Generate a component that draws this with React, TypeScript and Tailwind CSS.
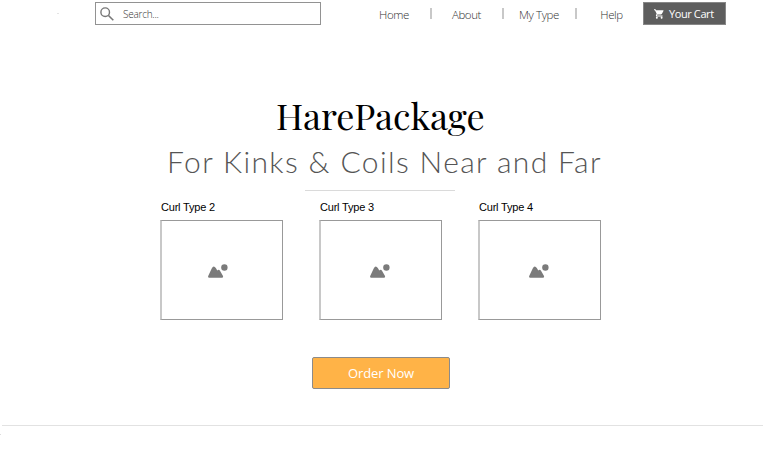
const sourceSans = "font-['Source_Sans_Pro','Open_Sans','Noto_Sans',sans-serif]";

function ImageIcon() {
  return (
    <svg width="20" height="14" viewBox="0 0 20 14" fill="#7b7b7b" aria-hidden="true">
      <path d="M.2 12 3.7 4.4Q5.7 .8 7.8 4.1L9.3 6.6Q10.8 5 12 6.7L15 12Q15.4 13.6 14 13.7H1.2Q-.3 13.5.2 12Z" />
      <circle cx="16.4" cy="3.5" r="3.2" />
    </svg>
  );
}

function SearchIcon() {
  return (
    <svg width="14" height="14" viewBox="0 0 14 14" fill="none" stroke="#777" aria-hidden="true">
      <circle cx="5.2" cy="5.2" r="4.3" strokeWidth="1.4" />
      <path d="m8.5 8.5 4.8 4.8" strokeWidth="1.6" />
    </svg>
  );
}

function CartIcon() {
  return (
    <svg width="10" height="10" viewBox="1 2 21 20" fill="#fff" aria-hidden="true">
      <path d="M7 18c-1.1 0-1.99.9-1.99 2S5.9 22 7 22s2-.9 2-2-.9-2-2-2zM1 2v2h2l3.6 7.59-1.35 2.45c-.16.28-.25.61-.25.96 0 1.1.9 2 2 2h12v-2H7.42c-.14 0-.25-.11-.25-.25l.03-.12.9-1.63h7.45c.75 0 1.41-.41 1.75-1.03l3.58-6.49A1 1 0 0 0 20 4H5.21l-.94-2H1zm16 16c-1.1 0-1.99.9-1.99 2s.89 2 1.99 2 2-.9 2-2-.9-2-2-2z" />
    </svg>
  );
}

function Separator() {
  return <span className="mt-2 h-[11px] w-[2px] shrink-0 bg-[#c8c8c8]" />;
}

function NavLink({ label, className }: { label: string; className: string }) {
  return (
    <a className={`shrink-0 whitespace-nowrap pt-[7px] text-center text-[11.5px] leading-4 font-light tracking-[-0.4px] text-[#333] ${className}`}>
      {label}
    </a>
  );
}

function CurlCard({ label, iconClass }: { label: string; iconClass: string }) {
  return (
    <div className="w-[123px]">
      <div className="h-[20px] pl-px font-['Liberation_Sans',sans-serif] text-[11px] leading-[14px] tracking-[-0.2px] text-black">{label}</div>
      <div className={`flex h-[100px] border border-l-2 border-[#999] border-l-[#c8c8c8] pt-[43px] ${iconClass}`}>
        <ImageIcon />
      </div>
    </div>
  );
}

export default function App() {
  return (
    <div className={`h-[464px] w-[764px] overflow-hidden bg-white ${sourceSans}`}>
      <header className="flex h-[28px] items-start">
        <span className="mt-[13px] ml-[57px] h-px w-[2px] bg-[#e4e4e4]" />
        <div className="mt-[2px] ml-[36px] flex h-[23px] w-[226px] items-center border border-[#929292] pl-[4px]">
          <SearchIcon />
          <span className="mt-px ml-[9px] text-[10px] font-light tracking-[-0.25px] text-[#333]">Search...</span>
        </div>
        <nav className="flex w-[322px] pl-[53px]">
          <NavLink label="Home" className="w-[40px]" />
          <span className="w-[16px] shrink-0" />
          <Separator />
          <NavLink label="About" className="w-[70px] pr-px" />
          <Separator />
          <NavLink label="My Type" className="w-[71px] pr-px" />
          <Separator />
          <NavLink label="Help" className="w-[66px] pl-[3px]" />
        </nav>
        <button className="mt-[2px] flex h-[23px] w-[83px] items-center gap-[5px] border border-[#878787] bg-[#5e5e5e] pl-[10px] text-[11px] tracking-[-0.4px] whitespace-nowrap text-white">
          <CartIcon />
          <span className="mt-px">Your Cart</span>
        </button>
      </header>

      <main className="flex flex-col">
        <h1 className="mt-[63px] ml-[276px] h-[49px] font-['Playfair_Display','Liberation_Serif',serif] text-[36px] leading-[48px] whitespace-nowrap text-black">
          HarePackage
        </h1>
        <h2 className="mt-[2px] ml-[167px] h-[40px] font-['Lato',sans-serif] text-[30px] leading-[39px] font-light tracking-[1.37px] whitespace-nowrap text-[#555]">
          For Kinks &amp; Coils Near and Far
        </h2>
        <div className="mt-[8px] ml-[305px] h-px w-[150px] bg-[#dadada]" />
        <section className="mt-[9px] ml-[160px] flex gap-[36px]">
          <CurlCard label="Curl Type 2" iconClass="pl-[46px]" />
          <CurlCard label="Curl Type 3" iconClass="pl-[49px]" />
          <CurlCard label="Curl Type 4" iconClass="pl-[49px]" />
        </section>
        <button className="mt-[37px] ml-[312px] h-[32px] w-[138px] rounded-[2px] border border-[#8b8b8b] bg-[#ffb347] text-[13px] leading-[30px] tracking-[-0.1px] text-white">
          Order Now
        </button>
      </main>
      <footer className="mt-[36px] mr-px ml-[2px] h-px bg-[#e2e2e2]" />
      <div className="mt-[8px] h-px w-px bg-[#ddd]" />
    </div>
  );
}
